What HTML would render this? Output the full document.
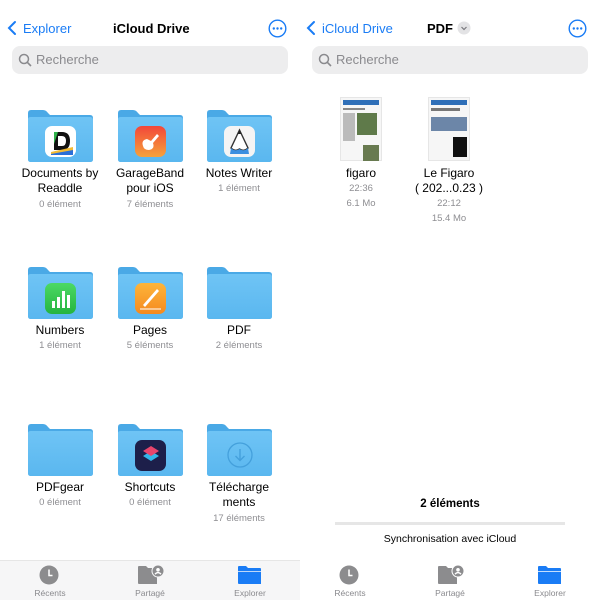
<!DOCTYPE html>
<html><head><meta charset="utf-8"><style>
*{margin:0;padding:0;box-sizing:border-box}
body{width:600px;height:600px;background:#fff;font-family:"Liberation Sans",sans-serif;position:relative;overflow:hidden;color:#000}
.a{position:absolute}
.t{position:absolute;text-align:center;width:100px;font-size:12px;line-height:15px}
.s{color:#8e8e92;font-size:9.5px;line-height:15px}
.blue{color:#1a7cf5}
.f{position:absolute;width:65px;height:52px}
.ico{position:absolute;left:17px;top:16px;width:31px;height:31px;border-radius:7px}
.tab{position:absolute;font-size:8.5px;text-align:center;width:60px;color:#8a8a8e}
</style></head><body>
<svg class="a" style="left:6px;top:20px" width="12" height="16"><path d="M9 2 L3 8 L9 14" stroke="#1a7cf5" stroke-width="2" fill="none" stroke-linecap="round"/></svg>
<div class="a blue" style="left:23px;top:21px;font-size:13px">Explorer</div>
<div class="a" style="left:113px;top:21px;font-size:13px;font-weight:bold">iCloud Drive</div>
<svg class="a" style="left:268px;top:19px" width="19" height="19"><circle cx="9.5" cy="9.5" r="8.3" stroke="#1a7cf5" stroke-width="1.4" fill="none"/><circle cx="5.8" cy="9.5" r="1.2" fill="#1a7cf5"/><circle cx="9.5" cy="9.5" r="1.2" fill="#1a7cf5"/><circle cx="13.2" cy="9.5" r="1.2" fill="#1a7cf5"/></svg>
<div class="a" style="left:12px;top:46px;width:276px;height:28px;background:#ededee;border-radius:8px"></div>
<svg class="a" style="left:18px;top:53px" width="14" height="14"><circle cx="6" cy="6" r="4.5" stroke="#8a8a8e" stroke-width="1.5" fill="none"/><path d="M9.3 9.3 L13 13" stroke="#8a8a8e" stroke-width="1.6"/></svg>
<div class="a" style="left:36px;top:52px;font-size:13px;color:#8a8a8e">Recherche</div>

<svg class="a" style="left:305px;top:20px" width="12" height="16"><path d="M9 2 L3 8 L9 14" stroke="#1a7cf5" stroke-width="2" fill="none" stroke-linecap="round"/></svg>
<div class="a blue" style="left:322px;top:21px;font-size:13px">iCloud Drive</div>
<div class="a" style="left:427px;top:21px;font-size:13px;font-weight:bold">PDF</div>
<svg class="a" style="left:457px;top:21px" width="14" height="14"><circle cx="7" cy="7" r="6.5" fill="#e3e3e5"/><path d="M4.5 6 L7 8.5 L9.5 6" stroke="#7a7a7e" stroke-width="1.2" fill="none"/></svg>
<svg class="a" style="left:568px;top:19px" width="19" height="19"><circle cx="9.5" cy="9.5" r="8.3" stroke="#1a7cf5" stroke-width="1.4" fill="none"/><circle cx="5.8" cy="9.5" r="1.2" fill="#1a7cf5"/><circle cx="9.5" cy="9.5" r="1.2" fill="#1a7cf5"/><circle cx="13.2" cy="9.5" r="1.2" fill="#1a7cf5"/></svg>
<div class="a" style="left:312px;top:46px;width:276px;height:28px;background:#ededee;border-radius:8px"></div>
<svg class="a" style="left:318px;top:53px" width="14" height="14"><circle cx="6" cy="6" r="4.5" stroke="#8a8a8e" stroke-width="1.5" fill="none"/><path d="M9.3 9.3 L13 13" stroke="#8a8a8e" stroke-width="1.6"/></svg>
<div class="a" style="left:336px;top:52px;font-size:13px;color:#8a8a8e">Recherche</div>

<svg width="0" height="0" style="position:absolute"><defs>
<linearGradient id="g" x1="0" y1="0" x2="0" y2="1"><stop offset="0" stop-color="#6fc4f5"/><stop offset="1" stop-color="#5ab7ef"/></linearGradient>
<symbol id="fd" viewBox="0 0 65 52"><path d="M0 3 Q0 0 3 0 L15 0 Q18 0 20 3 L22 5 L62 5 Q65 5 65 8 L65 49 Q65 52 62 52 L3 52 Q0 52 0 49 Z" fill="#4aa9e6"/><path d="M0 9 Q0 7 3 7 L62 7 Q65 7 65 10 L65 49 Q65 52 62 52 L3 52 Q0 52 0 49 Z" fill="url(#g)"/></symbol>
</defs></svg>

<div class="f" style="left:28px;top:110px"><svg width="65" height="52"><use href="#fd"/></svg>
<div class="ico" style="background:#fff;"><svg width="31" height="31"><path d="M9 6 L17 6 Q25 6 25 15 Q25 24 17 24 L9 24 Z" fill="#111"/><path d="M13 10 L17 10 Q21 10 21 15 Q21 20 17 20 L13 20 Z" fill="#fff"/><path d="M9 6 L13 6 L9 18Z" fill="#2fb24a"/><path d="M6 26 L28 21 L28 28 L6 28Z" fill="#f2b51f" opacity=".9"/><path d="M6 28 L28 24 L28 29 L6 29Z" fill="#2a6fd8"/></svg></div></div>
<div class="t" style="left:10px;top:166px">Documents by<br>Readdle</div>
<div class="t s" style="left:10px;top:197px">0 élément</div>

<div class="f" style="left:118px;top:110px"><svg width="65" height="52"><use href="#fd"/></svg>
<div class="ico" style="background:linear-gradient(#f2473a,#f6a23b)"><svg width="31" height="31"><path d="M8 20 Q6 14 12 13 L16 15 L22 8 L24 10 L18 17 Q20 23 14 24 Q9 24 8 20Z" fill="#fff"/></svg></div></div>
<div class="t" style="left:100px;top:166px">GarageBand<br>pour iOS</div>
<div class="t s" style="left:100px;top:197px">7 éléments</div>

<div class="f" style="left:207px;top:110px"><svg width="65" height="52"><use href="#fd"/></svg>
<div class="ico" style="background:#f4f4f4"><svg width="31" height="31"><path d="M15.5 4 L24 22 Q20 26 15.5 23 Q11 26 7 22 Z" fill="#fff" stroke="#333" stroke-width="1.4"/><path d="M7 22 Q11 26 15.5 23 Q20 26 24 22 L25 28 L6 28Z" fill="#3b8fe0"/><path d="M13.5 8 L15.5 4 L17.5 8Z" fill="#222"/></svg></div></div>
<div class="t" style="left:189px;top:166px">Notes Writer</div>
<div class="t s" style="left:189px;top:181px">1 élément</div>

<div class="f" style="left:28px;top:267px"><svg width="65" height="52"><use href="#fd"/></svg>
<div class="ico" style="background:linear-gradient(#4cd964,#25b440)"><svg width="31" height="31"><rect x="7" y="18" width="3" height="7" fill="#fff"/><rect x="12" y="14" width="3" height="11" fill="#fff"/><rect x="17" y="8" width="3" height="17" fill="#fff"/><rect x="22" y="12" width="3" height="13" fill="#fff"/></svg></div></div>
<div class="t" style="left:10px;top:323px">Numbers</div>
<div class="t s" style="left:10px;top:338px">1 élément</div>

<div class="f" style="left:118px;top:267px"><svg width="65" height="52"><use href="#fd"/></svg>
<div class="ico" style="background:linear-gradient(#fdb53a,#f58a1f)"><svg width="31" height="31"><path d="M8 22 L22 6 L24 8 L10 24Z" fill="#fff"/><path d="M5 26 L26 26" stroke="#fff" stroke-width="1"/></svg></div></div>
<div class="t" style="left:100px;top:323px">Pages</div>
<div class="t s" style="left:100px;top:338px">5 éléments</div>

<div class="f" style="left:207px;top:267px"><svg width="65" height="52"><use href="#fd"/></svg></div>
<div class="t" style="left:189px;top:323px">PDF</div>
<div class="t s" style="left:189px;top:338px">2 éléments</div>

<div class="f" style="left:28px;top:424px"><svg width="65" height="52"><use href="#fd"/></svg></div>
<div class="t" style="left:10px;top:480px">PDFgear</div>
<div class="t s" style="left:10px;top:495px">0 élément</div>

<div class="f" style="left:118px;top:424px"><svg width="65" height="52"><use href="#fd"/></svg>
<div class="ico" style="background:#1d1f4a"><svg width="31" height="31"><path d="M8 16 L16 11 L24 16 L16 21Z" fill="#33b6e8"/><path d="M8 11 L16 6 L24 11 L16 16Z" fill="#e8456c"/></svg></div></div>
<div class="t" style="left:100px;top:480px">Shortcuts</div>
<div class="t s" style="left:100px;top:495px">0 élément</div>

<div class="f" style="left:207px;top:424px"><svg width="65" height="52"><use href="#fd"/></svg>
<svg class="a" style="left:19px;top:17px" width="28" height="28"><circle cx="14" cy="14" r="12" stroke="#44a0dc" stroke-width="1.3" fill="none"/><path d="M14 8 L14 19 M9.5 15 L14 19.5 L18.5 15" stroke="#44a0dc" stroke-width="1.4" fill="none"/></svg></div>
<div class="t" style="left:189px;top:480px">Télécharge<br>ments</div>
<div class="t s" style="left:189px;top:511px">17 éléments</div>

<div class="a" style="left:340px;top:97px;width:42px;height:64px;background:#f6f6f6;border:1px solid #e6e6e6;padding:2px">
 <div style="height:5px;background:#2f6fb8"></div>
 <div style="margin-top:3px;height:2px;background:#888;width:60%"></div>
 <div style="margin-top:3px;display:flex;gap:2px"><div style="width:12px;height:28px;background:#bbb"></div><div style="width:20px;height:22px;background:#5f7a4a"></div></div>
 <div style="margin-top:4px;margin-left:20px;width:16px;height:16px;background:#687a50"></div>
</div>
<div class="t" style="left:311px;top:166px">figaro</div>
<div class="t s" style="left:311px;top:181px">22:36</div>
<div class="t s" style="left:311px;top:196px">6.1 Mo</div>

<div class="a" style="left:428px;top:97px;width:42px;height:64px;background:#f6f6f6;border:1px solid #e6e6e6;padding:2px">
 <div style="height:5px;background:#2f6fb8"></div>
 <div style="margin-top:3px;height:3px;background:#777;width:80%"></div>
 <div style="margin-top:6px;height:14px;background:#6c86a8"></div>
 <div style="margin-top:6px;margin-left:22px;width:14px;height:20px;background:#111"></div>
</div>
<div class="t" style="left:399px;top:166px;line-height:15px">Le Figaro<br>( 202...0.23 )</div>
<div class="t s" style="left:399px;top:196px">22:12</div>
<div class="t s" style="left:399px;top:211px">15.4 Mo</div>

<div class="a" style="left:300px;top:498px;width:300px;text-align:center;font-size:11.5px;font-weight:bold">2 éléments</div>
<div class="a" style="left:335px;top:522px;width:230px;height:3px;background:#e6e6e6"></div>
<div class="a" style="left:300px;top:533px;width:300px;text-align:center;font-size:10.5px">Synchronisation avec iCloud</div>

<div class="a" style="left:0;top:560px;width:300px;height:40px;background:#f6f6f7;border-top:1px solid #e6e6e6"></div>
<div class="a" style="left:300px;top:560px;width:300px;height:40px;background:#fff"></div>

<svg class="a" style="left:39px;top:565px" width="20" height="20"><circle cx="10" cy="10" r="9.5" fill="#8c8c8e"/><path d="M10 4.5 L10 10.5 L13.5 10.5" stroke="#fff" stroke-width="1.5" fill="none"/></svg>
<div class="tab" style="left:20px;top:588px">Récents</div>
<svg class="a" style="left:138px;top:565px" width="26" height="20"><path d="M0 2 Q0 1 1 1 L8 1 L10 3 L19 3 L19 19 L1 19 Q0 19 0 18Z" fill="#8c8c8e"/><circle cx="20" cy="6" r="6" fill="#8c8c8e" stroke="#f6f6f7" stroke-width="1"/><circle cx="20" cy="4.8" r="1.8" fill="#fff"/><path d="M17 9.2 Q20 6 23 9.2" stroke="#fff" stroke-width="1.4" fill="none"/></svg>
<div class="tab" style="left:120px;top:588px">Partagé</div>
<svg class="a" style="left:238px;top:565px" width="23" height="20"><path d="M0 2 Q0 1 1 1 L8 1 L10 3 L22 3 Q23 3 23 4 L23 19 L1 19 Q0 19 0 18Z" fill="#1a7cf5"/><path d="M0 6.5 L23 6.5" stroke="#f6f6f7" stroke-width=".8"/></svg>
<div class="tab blue" style="left:220px;top:588px">Explorer</div>

<svg class="a" style="left:339px;top:565px" width="20" height="20"><circle cx="10" cy="10" r="9.5" fill="#8c8c8e"/><path d="M10 4.5 L10 10.5 L13.5 10.5" stroke="#fff" stroke-width="1.5" fill="none"/></svg>
<div class="tab" style="left:320px;top:588px">Récents</div>
<svg class="a" style="left:438px;top:565px" width="26" height="20"><path d="M0 2 Q0 1 1 1 L8 1 L10 3 L19 3 L19 19 L1 19 Q0 19 0 18Z" fill="#8c8c8e"/><circle cx="20" cy="6" r="6" fill="#8c8c8e" stroke="#fff" stroke-width="1"/><circle cx="20" cy="4.8" r="1.8" fill="#fff"/><path d="M17 9.2 Q20 6 23 9.2" stroke="#fff" stroke-width="1.4" fill="none"/></svg>
<div class="tab" style="left:420px;top:588px">Partagé</div>
<svg class="a" style="left:538px;top:565px" width="23" height="20"><path d="M0 2 Q0 1 1 1 L8 1 L10 3 L22 3 Q23 3 23 4 L23 19 L1 19 Q0 19 0 18Z" fill="#1a7cf5"/><path d="M0 6.5 L23 6.5" stroke="#fff" stroke-width=".8"/></svg>
<div class="tab blue" style="left:520px;top:588px">Explorer</div>
</body></html>
